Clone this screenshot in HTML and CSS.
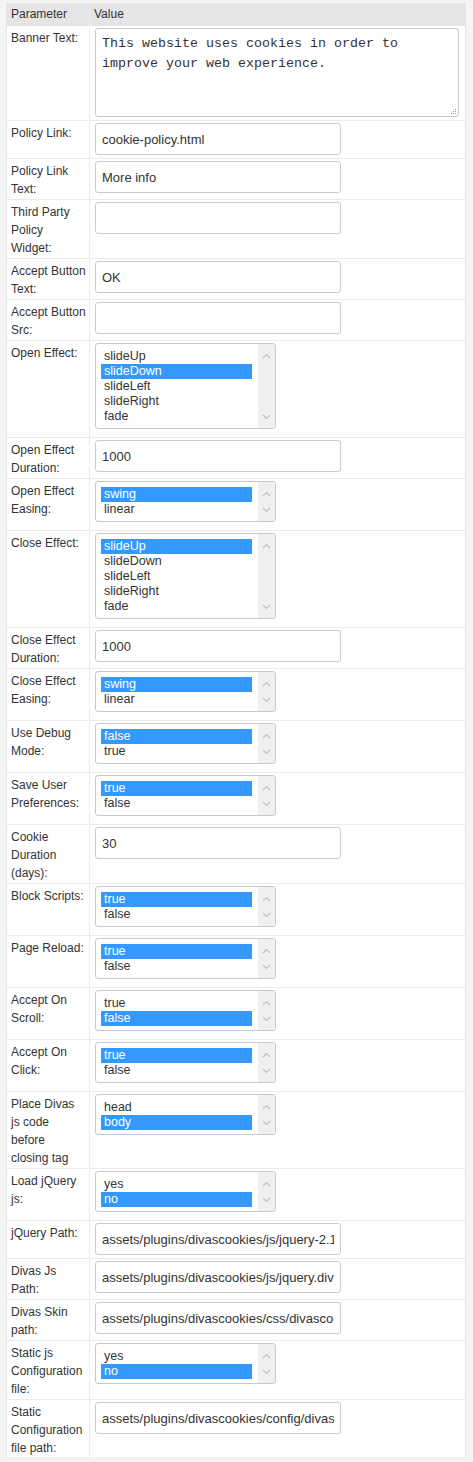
FILE: index.html
```html
<!DOCTYPE html>
<html>
<head>
<meta charset="utf-8">
<link rel="stylesheet" href="styles.css">
</head>
<body>
<div class="params">
  <div class="row head"><div class="k">Parameter</div><div class="v">Value</div></div>

  <div class="row"><div class="k">Banner Text:</div><div class="v">
    <div class="ta-wrap">
      <textarea class="ta">This website uses cookies in order to improve your web experience.</textarea>
      <svg class="grip" width="7" height="7" viewBox="0 0 7 7"><rect x="5" y="1" width="1" height="1"/><rect x="3" y="3" width="1" height="1"/><rect x="5" y="3" width="1" height="1"/><rect x="1" y="5" width="1" height="1"/><rect x="3" y="5" width="1" height="1"/><rect x="5" y="5" width="1" height="1"/></svg>
    </div>
  </div></div>

  <div class="row"><div class="k">Policy Link:</div><div class="v"><input class="inp" type="text" value="cookie-policy.html"></div></div>
  <div class="row"><div class="k">Policy Link Text:</div><div class="v"><input class="inp" type="text" value="More info"></div></div>
  <div class="row"><div class="k">Third Party Policy Widget:</div><div class="v"><input class="inp" type="text" value=""></div></div>
  <div class="row"><div class="k">Accept&nbsp;Button Text:</div><div class="v"><input class="inp" type="text" value="OK"></div></div>
  <div class="row"><div class="k">Accept&nbsp;Button Src:</div><div class="v"><input class="inp" type="text" value=""></div></div>

  <div class="row"><div class="k">Open Effect:</div><div class="v">
    <div class="lb"><div class="opts"><div class="o">slideUp</div><div class="o sel">slideDown</div><div class="o">slideLeft</div><div class="o">slideRight</div><div class="o">fade</div></div><div class="sb"><svg width="9" height="6" viewBox="0 0 9 6"><polyline points="1,5 4.5,1.5 8,5"/></svg><svg width="9" height="6" viewBox="0 0 9 6"><polyline points="1,1 4.5,4.5 8,1"/></svg></div></div>
  </div></div>

  <div class="row"><div class="k">Open Effect Duration:</div><div class="v"><input class="inp" type="text" value="1000"></div></div>

  <div class="row"><div class="k">Open Effect Easing:</div><div class="v">
    <div class="lb"><div class="opts"><div class="o sel">swing</div><div class="o">linear</div></div><div class="sb"><svg width="9" height="6" viewBox="0 0 9 6"><polyline points="1,5 4.5,1.5 8,5"/></svg><svg width="9" height="6" viewBox="0 0 9 6"><polyline points="1,1 4.5,4.5 8,1"/></svg></div></div>
  </div></div>

  <div class="row"><div class="k">Close Effect:</div><div class="v">
    <div class="lb"><div class="opts"><div class="o sel">slideUp</div><div class="o">slideDown</div><div class="o">slideLeft</div><div class="o">slideRight</div><div class="o">fade</div></div><div class="sb"><svg width="9" height="6" viewBox="0 0 9 6"><polyline points="1,5 4.5,1.5 8,5"/></svg><svg width="9" height="6" viewBox="0 0 9 6"><polyline points="1,1 4.5,4.5 8,1"/></svg></div></div>
  </div></div>

  <div class="row"><div class="k">Close Effect Duration:</div><div class="v"><input class="inp" type="text" value="1000"></div></div>

  <div class="row"><div class="k">Close Effect Easing:</div><div class="v">
    <div class="lb"><div class="opts"><div class="o sel">swing</div><div class="o">linear</div></div><div class="sb"><svg width="9" height="6" viewBox="0 0 9 6"><polyline points="1,5 4.5,1.5 8,5"/></svg><svg width="9" height="6" viewBox="0 0 9 6"><polyline points="1,1 4.5,4.5 8,1"/></svg></div></div>
  </div></div>

  <div class="row"><div class="k">Use Debug Mode:</div><div class="v">
    <div class="lb"><div class="opts"><div class="o sel">false</div><div class="o">true</div></div><div class="sb"><svg width="9" height="6" viewBox="0 0 9 6"><polyline points="1,5 4.5,1.5 8,5"/></svg><svg width="9" height="6" viewBox="0 0 9 6"><polyline points="1,1 4.5,4.5 8,1"/></svg></div></div>
  </div></div>

  <div class="row"><div class="k">Save User Preferences:</div><div class="v">
    <div class="lb"><div class="opts"><div class="o sel">true</div><div class="o">false</div></div><div class="sb"><svg width="9" height="6" viewBox="0 0 9 6"><polyline points="1,5 4.5,1.5 8,5"/></svg><svg width="9" height="6" viewBox="0 0 9 6"><polyline points="1,1 4.5,4.5 8,1"/></svg></div></div>
  </div></div>

  <div class="row"><div class="k">Cookie Duration (days):</div><div class="v"><input class="inp" type="text" value="30"></div></div>

  <div class="row"><div class="k">Block Scripts:</div><div class="v">
    <div class="lb"><div class="opts"><div class="o sel">true</div><div class="o">false</div></div><div class="sb"><svg width="9" height="6" viewBox="0 0 9 6"><polyline points="1,5 4.5,1.5 8,5"/></svg><svg width="9" height="6" viewBox="0 0 9 6"><polyline points="1,1 4.5,4.5 8,1"/></svg></div></div>
  </div></div>

  <div class="row"><div class="k">Page Reload:</div><div class="v">
    <div class="lb"><div class="opts"><div class="o sel">true</div><div class="o">false</div></div><div class="sb"><svg width="9" height="6" viewBox="0 0 9 6"><polyline points="1,5 4.5,1.5 8,5"/></svg><svg width="9" height="6" viewBox="0 0 9 6"><polyline points="1,1 4.5,4.5 8,1"/></svg></div></div>
  </div></div>

  <div class="row"><div class="k">Accept On Scroll:</div><div class="v">
    <div class="lb"><div class="opts"><div class="o">true</div><div class="o sel">false</div></div><div class="sb"><svg width="9" height="6" viewBox="0 0 9 6"><polyline points="1,5 4.5,1.5 8,5"/></svg><svg width="9" height="6" viewBox="0 0 9 6"><polyline points="1,1 4.5,4.5 8,1"/></svg></div></div>
  </div></div>

  <div class="row"><div class="k">Accept On Click:</div><div class="v">
    <div class="lb"><div class="opts"><div class="o sel">true</div><div class="o">false</div></div><div class="sb"><svg width="9" height="6" viewBox="0 0 9 6"><polyline points="1,5 4.5,1.5 8,5"/></svg><svg width="9" height="6" viewBox="0 0 9 6"><polyline points="1,1 4.5,4.5 8,1"/></svg></div></div>
  </div></div>

  <div class="row"><div class="k">Place Divas js code before closing tag</div><div class="v">
    <div class="lb"><div class="opts"><div class="o">head</div><div class="o sel">body</div></div><div class="sb"><svg width="9" height="6" viewBox="0 0 9 6"><polyline points="1,5 4.5,1.5 8,5"/></svg><svg width="9" height="6" viewBox="0 0 9 6"><polyline points="1,1 4.5,4.5 8,1"/></svg></div></div>
  </div></div>

  <div class="row"><div class="k">Load jQuery js:</div><div class="v">
    <div class="lb"><div class="opts"><div class="o">yes</div><div class="o sel">no</div></div><div class="sb"><svg width="9" height="6" viewBox="0 0 9 6"><polyline points="1,5 4.5,1.5 8,5"/></svg><svg width="9" height="6" viewBox="0 0 9 6"><polyline points="1,1 4.5,4.5 8,1"/></svg></div></div>
  </div></div>

  <div class="row"><div class="k">jQuery Path:</div><div class="v"><input class="inp" type="text" value="assets/plugins/divascookies/js/jquery-2.1.1.min.js"></div></div>
  <div class="row"><div class="k">Divas Js Path:</div><div class="v"><input class="inp" type="text" value="assets/plugins/divascookies/js/jquery.divascookies-0.6.min.js"></div></div>
  <div class="row"><div class="k">Divas Skin path:</div><div class="v"><input class="inp" type="text" value="assets/plugins/divascookies/css/divascookies_style_light_top.css"></div></div>

  <div class="row"><div class="k">Static js Configuration file:</div><div class="v">
    <div class="lb"><div class="opts"><div class="o">yes</div><div class="o sel">no</div></div><div class="sb"><svg width="9" height="6" viewBox="0 0 9 6"><polyline points="1,5 4.5,1.5 8,5"/></svg><svg width="9" height="6" viewBox="0 0 9 6"><polyline points="1,1 4.5,4.5 8,1"/></svg></div></div>
  </div></div>

  <div class="row"><div class="k">Static Configuration file path:</div><div class="v"><input class="inp" type="text" value="assets/plugins/divascookies/config/divascookies_config.js"></div></div>
</div>
</body>
</html>
```

FILE: styles.css
```css
html, body {
  margin: 0;
  padding: 0;
  background: #f5f5f5;
}

body {
  font-family: "Liberation Sans", Arial, sans-serif;
  color: #333;
  font-size: 12px;
}

.params {
  box-sizing: border-box;
  width: 460px;
  margin: 3px 0 0 6px;
  background: #fff;
  border-left: 1px solid #e6e6e6;
  border-right: 1px solid #e6e6e6;
}

.row {
  display: grid;
  grid-template-columns: 83px 1fr;
  border-bottom: 1px solid #ebebeb;
}

.k {
  padding: 3px 4.5px 1px 4px;
  border-right: 1px solid #ededed;
  line-height: 18px;
  font-size: 12px;
  color: #333;
}

.v {
  padding: 2px 0 3px 5px;
  min-width: 0;
}

.head {
  background: #e5e5e5;
  border-bottom: 0;
  height: 23px;
}

.head .k {
  padding: 2px 3px 3px 4px;
  border-right: 1px solid #ececec;
}

.head .v {
  padding: 2px 0 3px 4px;
  line-height: 18px;
}

.ta-wrap {
  position: relative;
  width: 364px;
}

.ta {
  display: block;
  box-sizing: border-box;
  width: 364px;
  height: 89px;
  margin: 0;
  padding: 5px 6px;
  border: 1px solid #ccc;
  border-radius: 3px;
  font-family: "Liberation Mono", "Courier New", monospace;
  font-size: 13.33px;
  line-height: 20px;
  color: #333;
  resize: none;
  background: #fff;
}

.grip {
  position: absolute;
  right: 2px;
  bottom: 2px;
  fill: #9a9a9a;
}

.inp {
  display: block;
  box-sizing: border-box;
  width: 246px;
  height: 32px;
  margin: 0;
  padding: 0 6px;
  border: 1px solid #ccc;
  border-radius: 3px;
  font-family: "Liberation Sans", Arial, sans-serif;
  font-size: 13px;
  color: #333;
  background: #fff;
  outline: none;
}

.lb {
  display: flex;
  box-sizing: border-box;
  width: 181px;
  margin-bottom: 5px;
  border: 1px solid #c8c8c8;
  border-radius: 3px;
  background: #fff;
  overflow: hidden;
}

.opts {
  flex: 1;
  padding: 5px 6px 4px 5px;
}

.o {
  height: 15px;
  line-height: 15px;
  padding-left: 3px;
  font-size: 12.5px;
  color: #333;
  white-space: nowrap;
}

.o.sel {
  background: #3399ff;
  color: #fff;
}

.sb {
  width: 17px;
  background: #f0f0f0;
  display: flex;
  flex-direction: column;
  justify-content: space-between;
  align-items: center;
  padding: 9px 0 8px;
  box-sizing: border-box;
}

.sb svg {
  display: block;
}

.sb polyline {
  fill: none;
  stroke: #c2c2c2;
  stroke-width: 1.2;
}
```
